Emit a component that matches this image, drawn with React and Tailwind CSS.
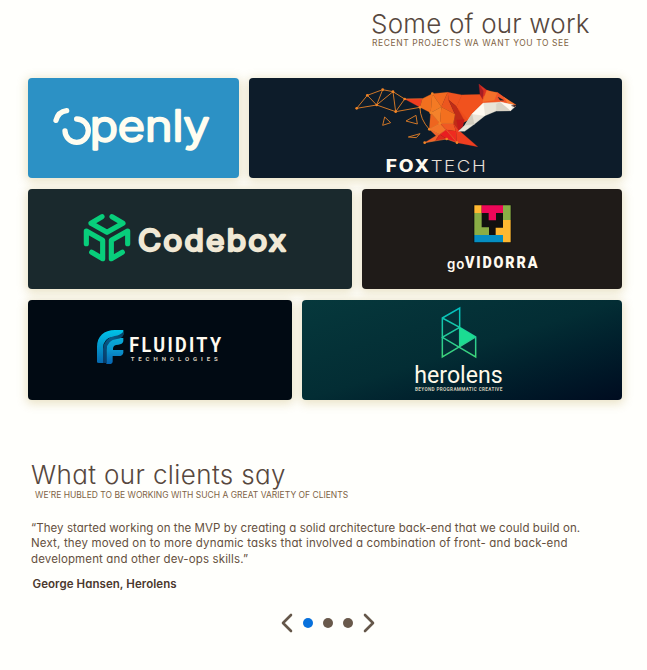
const tile = "h-[100px] overflow-hidden rounded shadow-[0_2px_10px_2px_rgba(190,165,85,0.3)]";

function Openly() {
  return (
    <svg viewBox="39 39 633 300" className="h-full w-full" fill="none" stroke="#fffdf0" strokeWidth="16" strokeLinecap="round" strokeLinejoin="round">
      <path d="M123 166Q130 140 155 137" />
      <path d="M185 162A35 35 0 1 1 150 198" />
      <text x="224" y="229" textLength="360" lengthAdjust="spacingAndGlyphs" fill="#fffdf0" strokeWidth="7" className="font-['Inter',sans-serif] text-[126px] font-light [font-feature-settings:'cv11']">penly</text>
    </svg>
  );
}

const foxFaces = [
  ["194,87 247,86 240,112", "#ee3d20"],
  ["247,86 277,71 272,128 240,112", "#f2701f"],
  ["277,71 323,67 304,111", "#f26a20"],
  ["277,71 304,111 272,128", "#f47a24"],
  ["323,67 366,75 350,110 326,90", "#ef5320"],
  ["323,67 326,90 345,133 304,111", "#ec571f"],
  ["366,75 420,74 404,106 350,110", "#f4551d"],
  ["350,110 404,106 386,150 366,160", "#ee4b1b"],
  ["326,90 350,110 372,150 358,182 340,160 345,133", "#c02c17"],
  ["272,128 304,111 300,160", "#f4822b"],
  ["304,111 345,133 340,160 300,160", "#f3701f"],
  ["272,128 300,160 268,178", "#ee651f"],
  ["268,178 300,160 318,179 299,193", "#f3752a"],
  ["300,160 340,160 348,184 318,179", "#f05923"],
  ["299,193 318,179 351,218 320,207", "#e91e20"],
  ["318,179 348,184 351,218", "#ee2b20"],
  ["340,160 358,182 413,230 351,218 348,184", "#ef3e20"],
  ["268,178 299,193 286,212 254,218 288,197", "#f0602a"],
  ["286,212 299,193 320,207", "#dc2a1b"],
  ["350,150 373,149 368,171 355,181", "#c41a19"],
  ["366,75 420,74 428,66 473,68 492,82 528,105 483,99 430,101 396,132 386,150 350,110", "#f1521e"],
  ["417,43 440,60 452,66 428,80", "#d93121"],
  ["417,43 430,63 428,88 420,74", "#a71d23"],
  ["440,61 473,68 464,91 428,95", "#f4702a"],
  ["473,68 492,82 503,100 464,91", "#f0562a"],
  ["492,82 528,105 503,100", "#fb7c32"],
  ["430,99 481,96 520,105 528,108 512,122 469,123 435,137 403,163 374,184 355,184 374,166 396,132", "#e9e4d8"],
  ["430,99 435,137 396,132", "#fffaf0"],
  ["396,132 403,163 374,166", "#d2ccbe"],
  ["469,102 481,96 512,122 469,123", "#d9d3c5"],
  ["481,96 520,105 512,122", "#fff9ee"],
  ["514,107 529,104 525,111", "#3a1918"],
  ["474,81 491,91 480,91", "#141c28"],
];

function Foxtech() {
  return (
    <svg viewBox="-273 24 1119 300" className="h-full w-full">
      <g fill="none" stroke="#cf7627" strokeWidth="3" strokeLinejoin="round">
        <path d="M50 115L82 76L128 59L159 65L194 87L167 125L110 105L50 115M82 76L110 105L128 59M110 105L159 65L167 125L240 112" />
        <path d="M134 141L152 158L128 166ZM228 136L232 162L198 153ZM240 191L205 201L229 203Z" />
        <path d="M240 112Q240 148 268 178" />
      </g>
      {foxFaces.map(([points, fill]) => <polygon key={points} points={points} fill={fill} stroke={fill} strokeWidth="0.8" />)}
      <path d="M194 87L247 86M272 128L300 160L268 178L299 193L318 179L351 218M300 160L340 160M254 218L320 207L351 218" fill="none" stroke="#f98c32" strokeWidth="1.4" />
      {[[50,115],[82,76],[128,59],[159,65],[194,87],[110,105],[167,125],[240,112],[277,71],[272,128],[268,178],[254,218],[300,160],[320,207],[351,218]].map(([x, y]) => <circle key={`${x}-${y}`} cx={x} cy={y} r="4" fill="#f18426" />)}
      <text transform="translate(137 305) scale(1.15 1)" textLength="113" lengthAdjust="spacing" fill="#fffaf0" className="font-['Inter',sans-serif] text-[50px] font-extrabold">FOX</text>
      <text transform="translate(272 305) scale(1.14 1)" textLength="145" lengthAdjust="spacing" fill="#e4dfd5" className="font-['Inter',sans-serif] text-[49px] font-light">TECH</text>
    </svg>
  );
}

function Codebox() {
  return (
    <svg viewBox="-127 -33 972 300" className="h-full w-full">
      <g fill="none" stroke="#08ce7b" strokeWidth="15.5" strokeLinecap="round" strokeLinejoin="round">
        <path d="M95 50L62 70L110 97L158 70L125 50" />
        <path d="M48 131V93L97 121V176L64 157" />
        <path d="M172 131V93L123 121V176L156 157" />
      </g>
      <text transform="translate(203 153) scale(1.08 1)" textLength="411" lengthAdjust="spacing" fill="#f0e8d5" stroke="#f0e8d5" strokeWidth="7" strokeLinejoin="round" className="font-['Inter',sans-serif] text-[88px] font-normal [font-feature-settings:'cv11']">Codebox</text>
    </svg>
  );
}

function GoVidorra() {
  return (
    <svg viewBox="-204 -3 780 300" className="h-full w-full">
      <path fill="#11100f" d="M130 44h114v115H130z" />
      <path fill="#ffb831" d="M133 46h22v23h-22zM219 90h23v67h-23v-22h-22v-22h22z" />
      <path fill="#ed0758" d="M155 46h64v23h-21v22h-22V69h-21z" />
      <path fill="#89ad45" d="M219 46h23v44h-23zM133 69h22v43h22v23h-44z" />
      <path fill="#058ec2" d="M133 135h86v22h-86z" />
      <text x="51" y="236" textLength="52" lengthAdjust="spacing" fill="#fffaf0" className="font-['Inter',sans-serif] text-[40px] font-semibold [font-feature-settings:'cv11']">go</text>
      <text transform="translate(105 234) scale(0.88 1)" textLength="247" lengthAdjust="spacing" fill="#fffaf0" className="font-['Roboto',sans-serif] text-[49px] font-black">VIDORRA</text>
    </svg>
  );
}

function Fluidity() {
  return (
    <svg viewBox="-156 -30 792 300" className="h-full w-full">
      <defs>
        <linearGradient id="fluidBlue" x1="0" y1="0" x2="0" y2="1"><stop stopColor="#08acd8" /><stop offset=".5" stopColor="#0a92cb" /><stop offset="1" stopColor="#0663b0" /></linearGradient>
        <linearGradient id="fluidDark" x1="0" y1="0" x2="0" y2="1"><stop stopColor="#00c3e8" /><stop offset="1" stopColor="#0667ad" /></linearGradient>
        <linearGradient id="fluidFold" x1="0" y1="1" x2="1" y2="0"><stop stopColor="#073a66" /><stop offset=".6" stopColor="#075d8d" /><stop offset="1" stopColor="#063f60" /></linearGradient>
      </defs>
      <path d="M51 156V111C51 79 72 60 105 60H130V72Q130 81 117 81H99Q69 84 69 116V159H57Q51 159 51 156Z" fill="url(#fluidDark)" />
      <path d="M79 162V120C79 97 91 85 113 84H130V94Q127 104 115 104Q99 104 99 116V120H130V128Q128 138 116 138H98V155Q97 162 88 162Z" fill="url(#fluidBlue)" />
      <path d="M69 159V117Q72 84 104 78Q122 75 130 65V76Q127 85 111 87Q82 90 79 120V159Z" fill="url(#fluidFold)" />
      <text transform="translate(148 125) scale(0.93 1)" textLength="296" lengthAdjust="spacing" fill="#fffaf0" className="font-['Roboto',sans-serif] text-[58px] font-bold">FLUIDITY</text>
      <text x="152" y="154" textLength="261" lengthAdjust="spacing" fill="#d8cdbc" className="font-['Roboto',sans-serif] text-[18px] font-bold">TECHNOLOGIES</text>
    </svg>
  );
}

function Herolens() {
  return (
    <svg viewBox="-294 15 960 300" className="h-full w-full">
      <defs><linearGradient id="lensGreen" gradientUnits="userSpaceOnUse" x1="150" y1="38" x2="150" y2="190"><stop stopColor="#00bfc2" /><stop offset="1" stopColor="#40d477" /></linearGradient></defs>
      <path d="M127 69L179 39V155L127 186ZM127 69L179 97L227 126V186L127 127L179 97" fill="none" stroke="url(#lensGreen)" strokeWidth="4.5" />
      <path d="M179 97L227 126L179 155Z" fill="#1bdc92" />
      <path d="M179 155L227 126" fill="none" stroke="url(#lensGreen)" strokeWidth="4" />
      <text x="43" y="264" textLength="265" lengthAdjust="spacingAndGlyphs" fill="#fff9e9" className="font-['Roboto',sans-serif] text-[73px] font-normal">herolens</text>
      <text x="45" y="288" textLength="262" lengthAdjust="spacing" fill="#cec9b8" className="font-['Roboto',sans-serif] text-[14px] font-bold">BEYOND PROGRAMMATIC CREATIVE</text>
    </svg>
  );
}

function Arrow({ right }) {
  return (
    <svg viewBox="0 0 12 20" className="h-5 w-3" fill="none" stroke="#65574a" strokeWidth="2.6" strokeLinecap="round" strokeLinejoin="round">
      <path d={right ? "M2 2L10 10L2 18" : "M10 2L2 10L10 18"} />
    </svg>
  );
}

export default function App() {
  return (
    <main className="h-[670px] w-[647px] overflow-hidden bg-[#fffffc] font-['Inter',sans-serif] text-[#65503e] [font-feature-settings:'cv11']">
      <header className="h-[78px] pl-[371px] pt-[9px]">
        <h1 className="whitespace-nowrap text-[26px] leading-[30px] font-light tracking-[0.2px] text-[#57483e]">Some of our work</h1>
        <p className="whitespace-nowrap pl-px text-[8.5px] leading-[8px] tracking-[0.58px] text-[#806345]">RECENT PROJECTS WA WANT YOU TO SEE</p>
      </header>
      <section className="flex flex-col gap-[11px] pl-[27.5px] pr-[25px]">
        <div className="grid grid-cols-[211px_373px] gap-2.5">
          <div className={`${tile} bg-[#2c91c5]`}><Openly /></div>
          <div className={`${tile} bg-[#0d1c2a]`}><Foxtech /></div>
        </div>
        <div className="grid grid-cols-[324px_260px] gap-2.5">
          <div className={`${tile} bg-[#1a292d]`}><Codebox /></div>
          <div className={`${tile} bg-[#1f1b18]`}><GoVidorra /></div>
        </div>
        <div className="grid grid-cols-[264px_320px] gap-2.5">
          <div className={`${tile} bg-[#010a13]`}><Fluidity /></div>
          <div className={`${tile} bg-linear-to-br from-[#06383c] via-[#032d34] to-[#000c20]`}><Herolens /></div>
        </div>
      </section>
      <section className="pl-[31px] pt-[59px]">
        <h2 className="whitespace-nowrap text-[26px] leading-[32px] font-light tracking-[0.38px] text-[#57483e]">What our clients say</h2>
        <p className="whitespace-nowrap pl-1 text-[8.5px] leading-[9px] text-[#806345]">WE’RE HUBLED TO BE WORKING WITH SUCH A GREAT VARIETY OF CLIENTS</p>
        <blockquote className="mt-[21px] whitespace-nowrap text-[11.5px] leading-[15.3px]">
          <p className="tracking-[0.07px]">“They started working on the MVP by creating a solid architecture back-end that we could build on.</p>
          <p className="tracking-[0.16px]">Next, they moved on to more dynamic tasks that involved a combination of front- and back-end</p>
          <p className="tracking-[0.13px]">development and other dev-ops skills.”</p>
        </blockquote>
        <p className="mt-[9px] pl-[1.5px] text-[11.5px] leading-4 font-semibold tracking-[0.06px] text-[#4b382e]">George Hansen, Herolens</p>
      </section>
      <nav className="mt-[21px] flex items-center pl-[281px]">
        <Arrow />
        <div className="mx-2.5 flex gap-2.5">
          <span className="size-2.5 rounded-full bg-[#0871dc]" />
          <span className="size-2.5 rounded-full bg-[#69594b]" />
          <span className="size-2.5 rounded-full bg-[#69594b]" />
        </div>
        <Arrow right />
      </nav>
    </main>
  );
}
